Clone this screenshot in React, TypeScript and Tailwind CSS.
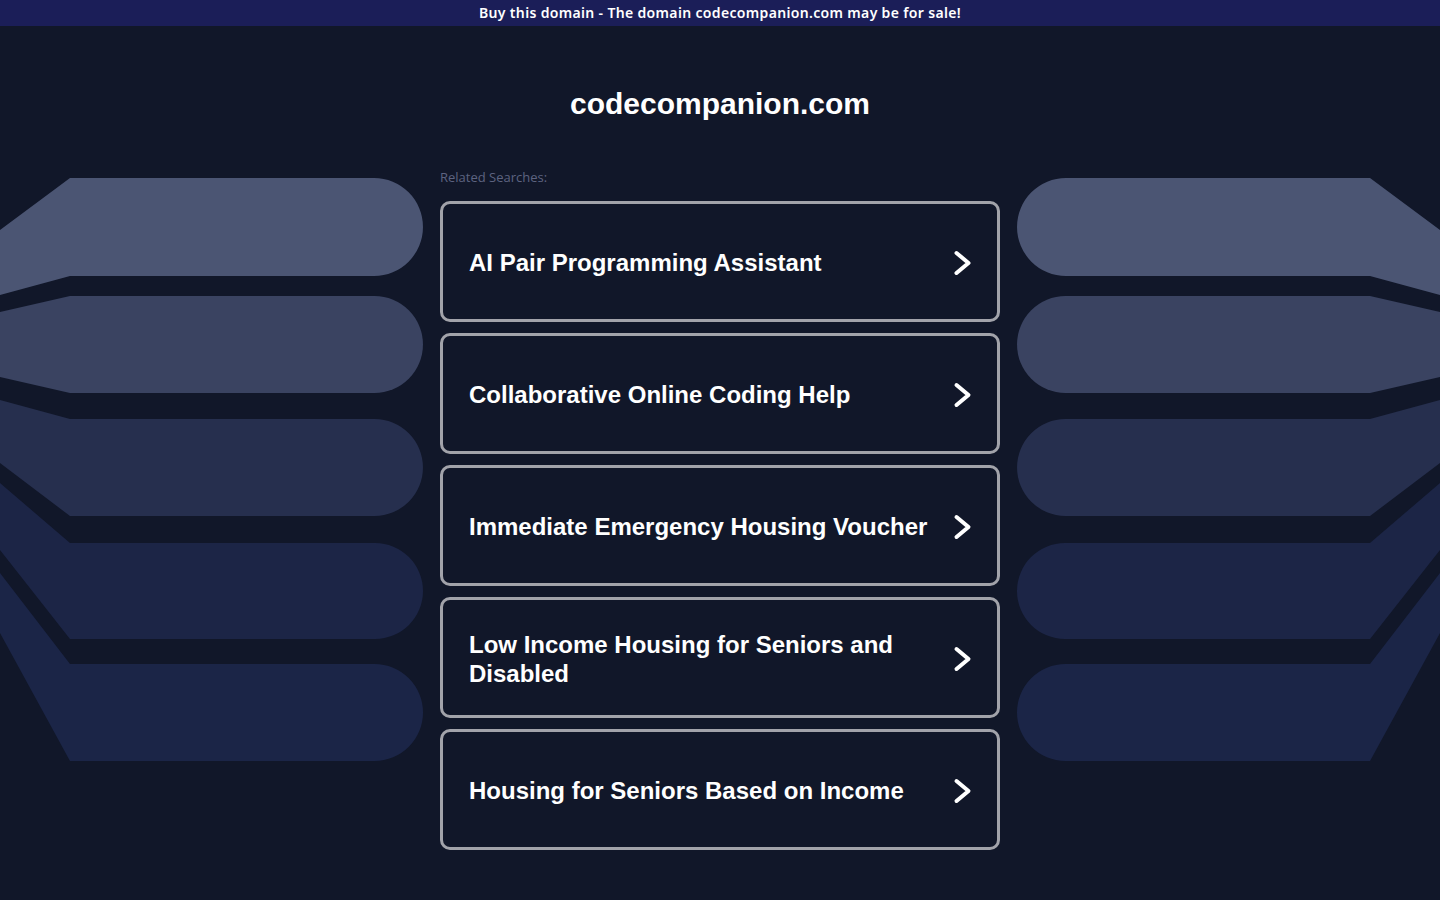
const searches = [
  "AI Pair Programming Assistant",
  "Collaborative Online Coding Help",
  "Immediate Emergency Housing Voucher",
  "Low Income Housing for Seniors and Disabled",
  "Housing for Seniors Based on Income",
];

// fan-shaped bands: [y at left edge (top), top, bottom, y at left edge (bottom), fill]
const bands: [number, number, number, number, string][] = [
  [230, 178, 276, 295, "#4b5573"],
  [312, 296, 393, 377, "#3a4361"],
  [400, 419, 516, 463, "#262f4e"],
  [483, 543, 639, 550, "#1c2546"],
  [573, 664, 761, 633, "#1b2547"],
];

function bandPath([l1, top, bottom, l2]: [number, number, number, number, string]) {
  const r = (bottom - top) / 2;
  const x = 423 - r;
  return `M0,${l1} L70,${top} H${x} A${r},${r} 0 0 1 ${x},${bottom} H70 L0,${l2} Z`;
}

function Bands({ className }: { className: string }) {
  return (
    <svg
      className={className}
      width="424"
      height="900"
      viewBox="0 0 424 900"
      aria-hidden="true"
    >
      {bands.map((b, i) => (
        <path key={i} d={bandPath(b)} fill={b[4]} />
      ))}
    </svg>
  );
}

function Chevron() {
  return (
    <svg width="20" height="28" viewBox="0 0 20 28" className="shrink-0">
      <path
        d="M3.5 4 L15.5 14 L3.5 24"
        fill="none"
        stroke="#ffffff"
        strokeWidth="4"
        strokeLinecap="round"
        strokeLinejoin="round"
      />
    </svg>
  );
}

export default function App() {
  return (
    <div className="relative min-h-screen h-[900px] overflow-hidden bg-[#111729]">
      <Bands className="absolute left-0 top-0" />
      <Bands className="absolute right-0 top-0 -scale-x-100" />

      <div className="relative z-10 flex h-[26px] items-center justify-center bg-[#1b1e58] pb-[2px]">
        <span className="text-[14px] font-semibold tracking-[0.34px] text-white font-['Noto_Sans',sans-serif]">
          Buy this domain - The domain codecompanion.com may be for sale!
        </span>
      </div>

      <main className="relative z-10 mx-auto w-[560px]">
        <h1 className="mt-[58px] text-center text-[30px] font-bold leading-[40px] text-white font-['Liberation_Sans',Arial,sans-serif]">
          codecompanion.com
        </h1>
        <p className="mt-[45px] text-[13px] leading-4 text-[#5d6380] font-['Open_Sans',sans-serif]">
          Related Searches:
        </p>
        <div className="mt-4 flex flex-col gap-[11px]">
          {searches.map((s) => (
            <a
              key={s}
              href="#"
              className="flex h-[121px] items-center gap-[10px] rounded-[10px] border-[3px] border-[#a2a3aa] pl-[26px] pr-[24px] pt-[2px]"
            >
              <span className="flex-1 text-[24px] font-bold leading-[29px] text-white font-['Liberation_Sans',Arial,sans-serif]">
                {s}
              </span>
              <Chevron />
            </a>
          ))}
        </div>
      </main>
    </div>
  );
}
